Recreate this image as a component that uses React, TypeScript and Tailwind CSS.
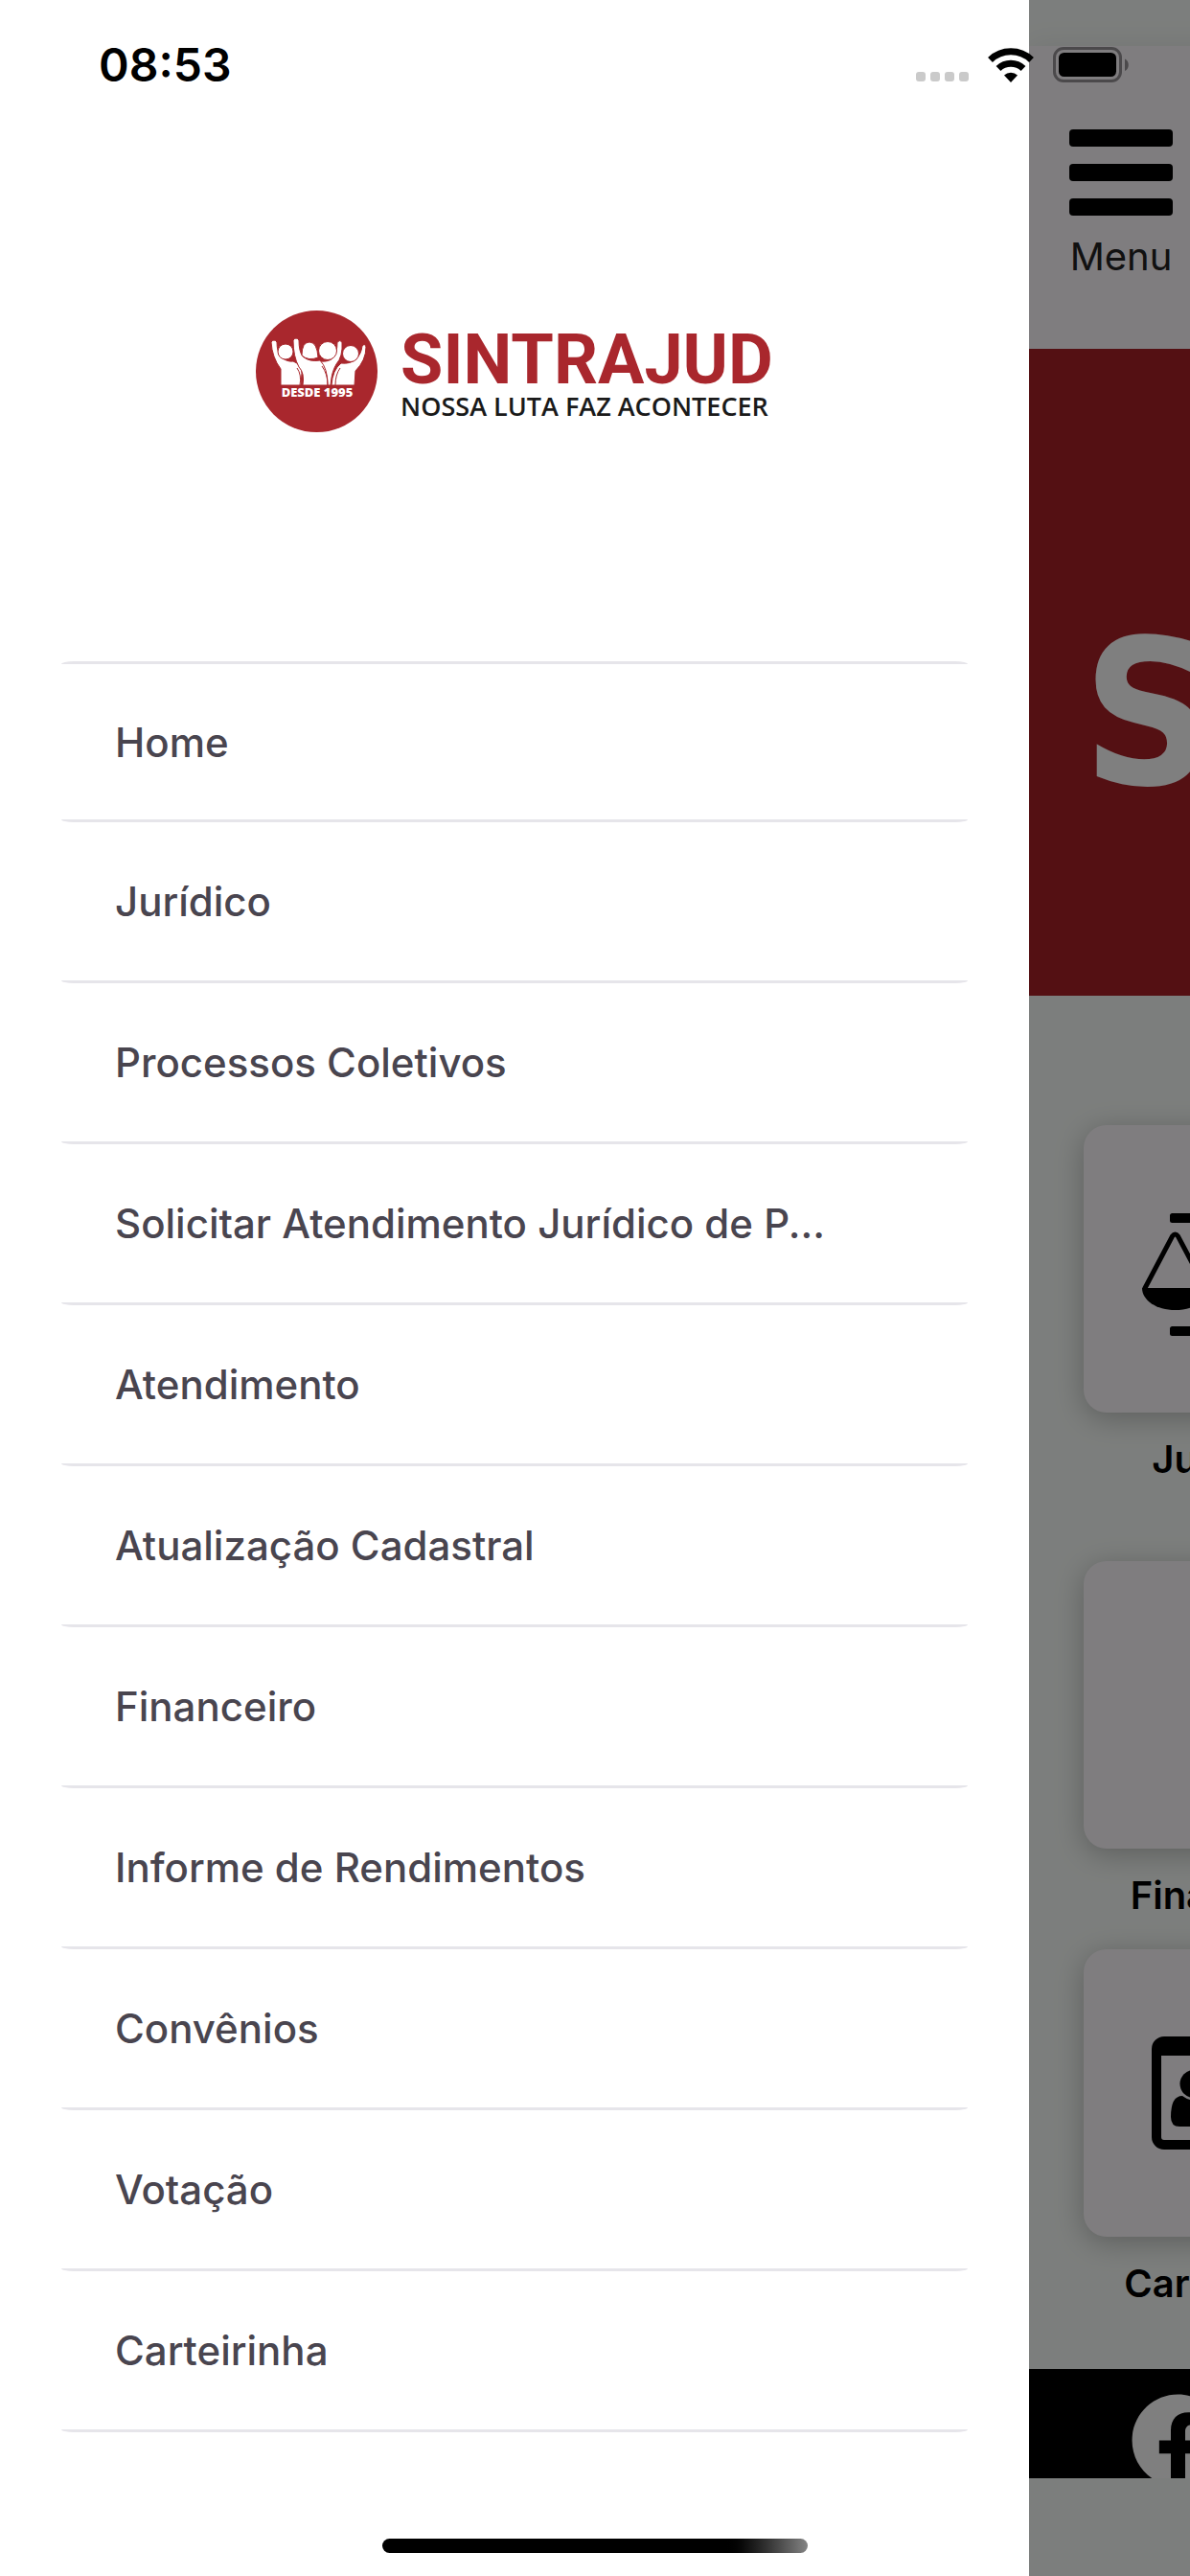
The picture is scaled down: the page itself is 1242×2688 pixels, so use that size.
import type { ReactNode } from 'react';
import { FaFacebook } from 'react-icons/fa';

const menuItems = [
  'Home',
  'Jurídico',
  'Processos Coletivos',
  'Solicitar Atendimento Jurídico de P...',
  'Atendimento',
  'Atualização Cadastral',
  'Financeiro',
  'Informe de Rendimentos',
  'Convênios',
  'Votação',
  'Carteirinha',
];

function WifiIcon() {
  return (
    <svg width="48" height="36" viewBox="0 0 48 36" aria-hidden="true">
      <g fill="none" stroke="#000" strokeWidth="7">
        <path d="M2.5 12.5a31 31 0 0 1 43 0" />
        <path d="M11 21.5a19 19 0 0 1 26 0" />
      </g>
      <path d="M24 36l-7-7.5a10 10 0 0 1 14 0z" />
    </svg>
  );
}

function BatteryIcon() {
  return (
    <svg width="80" height="38" viewBox="0 0 80 38" aria-hidden="true">
      <rect x="1.5" y="1.5" width="69" height="34" rx="9.5" fill="none" stroke="#4b494b" strokeWidth="3" />
      <rect x="6" y="6" width="60" height="25" rx="5.5" />
      <path d="M75 12.5c5 2 5 10.5 0 12.5z" fill="#4b494b" />
    </svg>
  );
}

function StatusBar() {
  return (
    <div className="pointer-events-none absolute inset-x-0 top-0 z-20 flex h-[136px] items-center justify-between pr-[63px] pl-[103px]">
      <time className="text-[48px] leading-none font-semibold text-black">08:53</time>
      <div className="flex items-center">
        <div className="mt-6 mr-[20px] flex gap-[5px]">
          {[0, 1, 2, 3].map((dot) => (
            <span key={dot} className="size-[10px] rounded-[3px] bg-[#cacaca]" />
          ))}
        </div>
        <WifiIcon />
        <div className="ml-5">
          <BatteryIcon />
        </div>
      </div>
    </div>
  );
}

function Logo() {
  return (
    <div className="flex items-center justify-center gap-6">
      <svg width="127" height="127" viewBox="0 0 127 127" role="img" aria-label="Sintrajud">
        <circle cx="63.5" cy="63.5" r="63.5" fill="#a9272d" />
        <g fill="#fff" stroke="#a9272d" strokeWidth="1">
          <path d="M16 33q3-4 6 0 0 10 4 15 6 6 13 5 8 3 9 12l-1 13H26V61Q17 49 16 33z" />
          <path d="M111 37q3-3 4 1 0 14-11 25l-1 15H79q1-16 10-23 10 1 15-4 6-5 7-14z" />
          <path d="M85 33q3-3 5 0 1 15-6 23-5 8-6 22h-9q-2-15-2-25 10 1 14-4 4-5 4-16z" />
          <path d="M39 31q3-4 6 0 0 12 4 17 7 6 18 4 8 8 8 26H49q2-13-4-19-6-11-6-28z" />
        </g>
        <g fill="none" stroke="#a9272d" strokeWidth="1">
          <path d="M43 60q5 7 3 18M69 58q6 8 6 20M88 60q-5 7-5 18" />
        </g>
        <g fill="#fff" stroke="#a9272d" strokeWidth="1">
          <circle cx="31" cy="43" r="8" />
          <path d="M48 47q0-14 8-14 8 0 9 16-10 4-17-2z" />
          <circle cx="75" cy="42" r="9.5" />
          <circle cx="99" cy="45" r="8.5" />
        </g>
        <text
          x="64"
          y="90"
          textAnchor="middle"
          fill="#fff"
          fontSize="13"
          fontWeight="800"
          fontFamily="'Open Sans', sans-serif"
        >
          DESDE 1995
        </text>
      </svg>
      <div>
        <p className="font-[Roboto,sans-serif] text-[72px] leading-[72px] font-bold text-[#a9272d]">SINTRAJUD</p>
        <p className="font-['Open_Sans',sans-serif] text-[27px] leading-[24px] font-semibold text-[#1a1a1a]">
          NOSSA LUTA FAZ ACONTECER
        </p>
      </div>
    </div>
  );
}

function Drawer() {
  return (
    <aside className="flex min-w-0 flex-1 flex-col bg-white">
      <div className="flex h-[690px] flex-col pt-[324px]">
        <Logo />
      </div>
      <nav className="px-16 pb-[150px]">
        <div className="h-[3px] bg-[#e6e5ea] [border-radius:13px_13px_0_0/3px_3px_0_0]" />
        <ul>
          {menuItems.map((item, i) => (
            <li key={item}>
              <a
                href="#"
                className={`flex items-center px-14 text-[42px] font-medium text-[#49454f] ${i === 0 ? 'h-[162px]' : 'h-[165px]'}`}
              >
                <span className="truncate">{item}</span>
              </a>
              <div className="h-[3px] bg-[#e6e5ea] [border-radius:0_0_13px_13px/0_0_3px_3px]" />
            </li>
          ))}
        </ul>
      </nav>
    </aside>
  );
}

function ScaleIcon() {
  return (
    <svg width="180" height="139" viewBox="0 -11 180 139" aria-hidden="true">
      <rect x="30" y="0" width="120" height="10" rx="2.5" />
      <rect x="30" y="118" width="120" height="10" rx="2.5" />
      <rect x="85" y="0" width="10" height="128" />
      {[35.5, 144.5].map((x) => (
        <g key={x} transform={`translate(${x} 0)`}>
          <path d="M-32 79L-3 24q3-4 6 0L32 79" fill="none" stroke="#000" strokeWidth="5" />
          <path d="M-34.5 78h69c0 13-15 23-34.5 23s-34.5-10-34.5-23z" />
        </g>
      ))}
    </svg>
  );
}

function IdCardIcon() {
  return (
    <svg width="158" height="118" viewBox="0 0 158 118" aria-hidden="true">
      <path
        fillRule="evenodd"
        d="M13 0h132a13 13 0 0 1 13 13v92a13 13 0 0 1-13 13H13a13 13 0 0 1-13-13V13A13 13 0 0 1 13 0zM10 20v85q0 3 3 3h132q3 0 3-3V20z"
      />
      <circle cx="44" cy="49.5" r="14.5" />
      <path d="M32 62q12 9 24 0 12 0 12 22 0 10-9 10H29q-9 0-9-10 0-22 12-22z" />
      <path d="M88 44h42v9H88zM88 66h42v9H88z" />
    </svg>
  );
}

function Tile({ label, tall, children }: { label: string; tall?: boolean; children?: ReactNode }) {
  return (
    <a href="#" className="flex flex-col items-center gap-6 text-black">
      <span className="flex size-[300px] items-center justify-center rounded-3xl bg-[#fffbff] shadow-[0_6px_30px_rgba(0,0,0,0.25)]">
        {children}
      </span>
      <span className={`text-[40px] leading-[50px] font-semibold ${tall ? 'h-[131px]' : 'h-[81px]'}`}>{label}</span>
    </a>
  );
}

function HomeScreen() {
  return (
    <main className="relative w-[168px] shrink-0 overflow-hidden bg-[#f9fdfa]">
      <div className="flex min-h-full w-screen flex-col pt-12">
        <header className="flex h-[316px] items-start bg-[#fffbff] px-[42px] pt-[87px] shadow-[0_0_30px_rgba(0,0,0,0.08)]">
          <button type="button" className="flex w-[108px] flex-col items-center gap-[18px]">
            <span className="h-[18px] w-full rounded-[4px] bg-black" />
            <span className="h-[18px] w-full rounded-[4px] bg-black" />
            <span className="h-[18px] w-full rounded-[4px] bg-black" />
            <span className="text-[40px] leading-[50px] text-[#222]">Menu</span>
          </button>
        </header>
        <section className="flex h-[675px] items-center bg-[#a82027] px-14 pt-[88px]">
          <p className="font-['DejaVu_Sans_Condensed','DejaVu_Sans',sans-serif] text-[210px] leading-none font-bold text-white">
            SINTRAJUD
          </p>
        </section>
        <section className="flex w-1/3 flex-col pt-[135px]">
          <Tile label="Jurídico" tall>
            <ScaleIcon />
          </Tile>
          <Tile label="Financeiro" />
          <Tile label="Carteirinha">
            <IdCardIcon />
          </Tile>
        </section>
        <footer className="mt-[33px] flex h-[114px] items-start overflow-hidden bg-black px-[106px] pt-[25px]">
          <a href="#" aria-label="Facebook" className="shrink-0">
            <FaFacebook className="size-[99px] text-white" />
          </a>
        </footer>
      </div>
      <button type="button" aria-label="Fechar menu" className="absolute inset-0 bg-black/50" />
    </main>
  );
}

export default function App() {
  return (
    <div className="relative flex min-h-screen overflow-hidden bg-white font-['Inter',sans-serif]">
      <StatusBar />
      <Drawer />
      <HomeScreen />
      <div className="pointer-events-none absolute inset-x-0 bottom-6 z-20 flex justify-center">
        <div className="h-[15px] w-[444px] rounded-full bg-linear-to-r from-black from-80% to-[#858585]" />
      </div>
    </div>
  );
}
